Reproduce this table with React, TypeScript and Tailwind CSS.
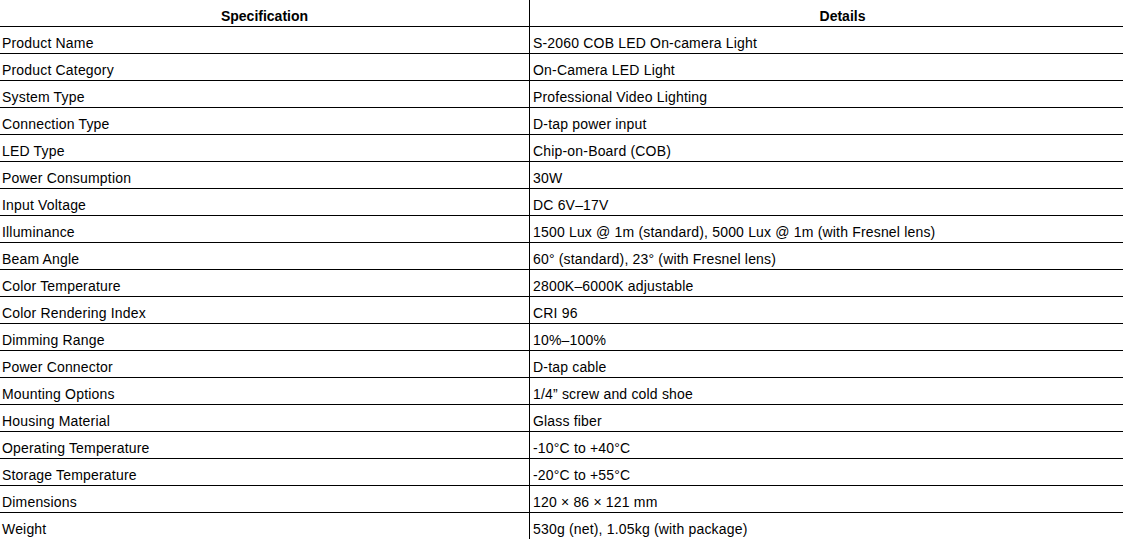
const rows: [string, string][] = [
  ["Product Name", "S-2060 COB LED On-camera Light"],
  ["Product Category", "On-Camera LED Light"],
  ["System Type", "Professional Video Lighting"],
  ["Connection Type", "D-tap power input"],
  ["LED Type", "Chip-on-Board (COB)"],
  ["Power Consumption", "30W"],
  ["Input Voltage", "DC 6V–17V"],
  ["Illuminance", "1500 Lux @ 1m (standard), 5000 Lux @ 1m (with Fresnel lens)"],
  ["Beam Angle", "60° (standard), 23° (with Fresnel lens)"],
  ["Color Temperature", "2800K–6000K adjustable"],
  ["Color Rendering Index", "CRI 96"],
  ["Dimming Range", "10%–100%"],
  ["Power Connector", "D-tap cable"],
  ["Mounting Options", "1/4” screw and cold shoe"],
  ["Housing Material", "Glass fiber"],
  ["Operating Temperature", "-10°C to +40°C"],
  ["Storage Temperature", "-20°C to +55°C"],
  ["Dimensions", "120 × 86 × 121 mm"],
  ["Weight", "530g (net), 1.05kg (with package)"],
];

export default function App() {
  return (
    <div className="h-screen w-full overflow-hidden bg-white font-['Liberation_Sans',Arial,sans-serif] text-[14px] leading-4 text-black">
      <div className="w-[1155px]">
        <div className="flex border-b border-black font-bold">
          <div className="flex h-[26px] w-[530px] items-end justify-center border-r border-black pb-[2px]">
            Specification
          </div>
          <div className="flex h-[26px] flex-1 items-end justify-center pb-[2px]">
            Details
          </div>
        </div>
        {rows.map(([spec, detail]) => (
          <div key={spec} className="flex border-b border-black tracking-[0.18px]">
            <div className="flex h-[26px] w-[530px] items-end border-r border-black pb-[2px] pl-[2px]">
              {spec}
            </div>
            <div className="flex h-[26px] flex-1 items-end pb-[2px] pl-[3px]">
              {detail}
            </div>
          </div>
        ))}
      </div>
    </div>
  );
}
